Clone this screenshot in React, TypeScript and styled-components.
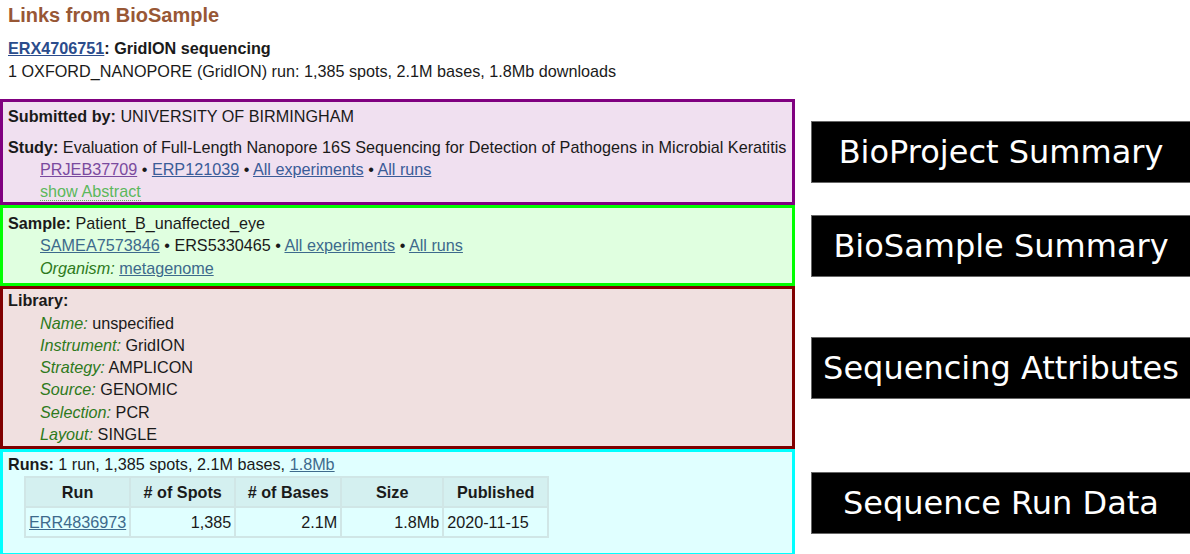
import styled, { createGlobalStyle } from 'styled-components';

const Global = createGlobalStyle`
    html, body {
        margin: 0;
        padding: 0;
        background: #ffffff;
    }
    body {
        font-family: "Liberation Sans", Arial, sans-serif;
        font-size: 16.2px;
        color: #1a1a1a;
    }
`;

const Page = styled.div`
    width: 1190px;
    height: 554px;
    overflow: hidden;
`;

const Header = styled.div`
    padding: 3px 8px 0 8px;
    height: 99px;
    line-height: 22.4px;
    box-sizing: border-box;
`;

const Title = styled.h1`
    margin: 0 0 10px 0;
    font-size: 20px;
    line-height: 24px;
    font-weight: bold;
    color: #985735;
`;

const ExpTitle = styled.div`
    font-weight: bold;
    line-height: 23px;
`;

const Line = styled.div`
    line-height: inherit;
`;

const Grid = styled.div`
    display: grid;
    grid-template-columns: 795px 1fr;
    column-gap: 16px;
    align-items: center;
`;

const Box = styled.div<{ $border: string; $bg: string; $pad: string; $lh?: number }>`
    border: 3px solid ${p => p.$border};
    background: ${p => p.$bg};
    padding: ${p => p.$pad};
    line-height: ${p => p.$lh || 22.4}px;
    box-sizing: border-box;
`;

const Label = styled.div`
    background: #000;
    border: 1px solid #666;
    border-right: none;
    color: #fff;
    font-family: "DejaVu Sans", Verdana, sans-serif;
    font-size: 32px;
    height: 62px;
    display: flex;
    align-items: center;
    justify-content: center;
    box-sizing: border-box;
`;

const Indent = styled.div`
    padding-left: 32px;
`;

const Gap = styled.div`
    height: 9px;
`;

const B = styled.b``;

const Link = styled.a<{ $color: string }>`
    color: ${p => p.$color};
    text-decoration: underline;
`;

const Toggle = styled.span`
    color: #5cb85c;
    border-bottom: 1px dotted #5cb85c;
`;

const Attr = styled.i`
    color: #2e7a1c;
`;

const Table = styled.table`
    margin-left: 16px;
    border-collapse: collapse;
    margin-bottom: 15px;
`;

const Th = styled.th<{ $w: number }>`
    width: ${p => p.$w}px;
    height: 30px;
    box-sizing: border-box;
    background: #d4f0f0;
    border: 2px solid #d0e6e6;
    font-weight: bold;
    text-align: center;
    padding: 0 3px;
`;

const Td = styled.td<{ $align?: string }>`
    height: 30px;
    box-sizing: border-box;
    border: 2px solid #d0e6e6;
    text-align: ${p => p.$align || 'left'};
    padding: 0 3px;
`;

const sep = ' \u2022 ';

export default function App() {
    return (
        <Page>
            <Global />
            <Header>
                <Title>Links from BioSample</Title>
                <ExpTitle>
                    <Link $color="#2b4c8c" href="#">ERX4706751</Link>: GridION sequencing
                </ExpTitle>
                <Line>1 OXFORD_NANOPORE (GridION) run: 1,385 spots, 2.1M bases, 1.8Mb downloads</Line>
            </Header>
            <Grid>
                <Box $border="#800080" $bg="#f0e0f0" $pad="3px 5px 0 5px" $lh={22}>
                    <Line><B>Submitted by:</B> UNIVERSITY OF BIRMINGHAM</Line>
                    <Gap />
                    <Line><B>Study:</B> Evaluation of Full-Length Nanopore 16S Sequencing for Detection of Pathogens in Microbial Keratitis</Line>
                    <Indent>
                        <Link $color="#7a4a9e" href="#">PRJEB37709</Link>{sep}
                        <Link $color="#3b5c98" href="#">ERP121039</Link>{sep}
                        <Link $color="#3b5c98" href="#">All experiments</Link>{sep}
                        <Link $color="#3b5c98" href="#">All runs</Link>
                    </Indent>
                    <Indent><Toggle>show Abstract</Toggle></Indent>
                </Box>
                <Label>BioProject Summary</Label>

                <Box $border="#00ff00" $bg="#e0ffe0" $pad="4px 5px 4px 5px">
                    <Line><B>Sample:</B> Patient_B_unaffected_eye</Line>
                    <Indent>
                        <Link $color="#3d6a8c" href="#">SAMEA7573846</Link>{sep}ERS5330465{sep}
                        <Link $color="#3d6a8c" href="#">All experiments</Link>{sep}
                        <Link $color="#3d6a8c" href="#">All runs</Link>
                    </Indent>
                    <Indent><Attr>Organism:</Attr> <Link $color="#3d6a8c" href="#">metagenome</Link></Indent>
                </Box>
                <Label>BioSample Summary</Label>

                <Box $border="#800000" $bg="#f0e0e0" $pad="0 5px 1px 5px" $lh={22.3}>
                    <Line><B>Library:</B></Line>
                    <Indent><Attr>Name:</Attr> unspecified</Indent>
                    <Indent><Attr>Instrument:</Attr> GridION</Indent>
                    <Indent><Attr>Strategy:</Attr> AMPLICON</Indent>
                    <Indent><Attr>Source:</Attr> GENOMIC</Indent>
                    <Indent><Attr>Selection:</Attr> PCR</Indent>
                    <Indent><Attr>Layout:</Attr> SINGLE</Indent>
                </Box>
                <Label>Sequencing Attributes</Label>

                <Box $border="#00ffff" $bg="#e0ffff" $pad="1px 5px 0 5px">
                    <Line><B>Runs:</B> 1 run, 1,385 spots, 2.1M bases, <Link $color="#3d6a8c" href="#">1.8Mb</Link></Line>
                    <Table>
                        <thead>
                            <tr>
                                <Th $w={104}>Run</Th>
                                <Th $w={105}># of Spots</Th>
                                <Th $w={106}># of Bases</Th>
                                <Th $w={102}>Size</Th>
                                <Th $w={105}>Published</Th>
                            </tr>
                        </thead>
                        <tbody>
                            <tr>
                                <Td><Link $color="#3d6a8c" href="#">ERR4836973</Link></Td>
                                <Td $align="right">1,385</Td>
                                <Td $align="right">2.1M</Td>
                                <Td $align="right">1.8Mb</Td>
                                <Td>2020-11-15</Td>
                            </tr>
                        </tbody>
                    </Table>
                </Box>
                <Label>Sequence Run Data</Label>
            </Grid>
        </Page>
    );
}
